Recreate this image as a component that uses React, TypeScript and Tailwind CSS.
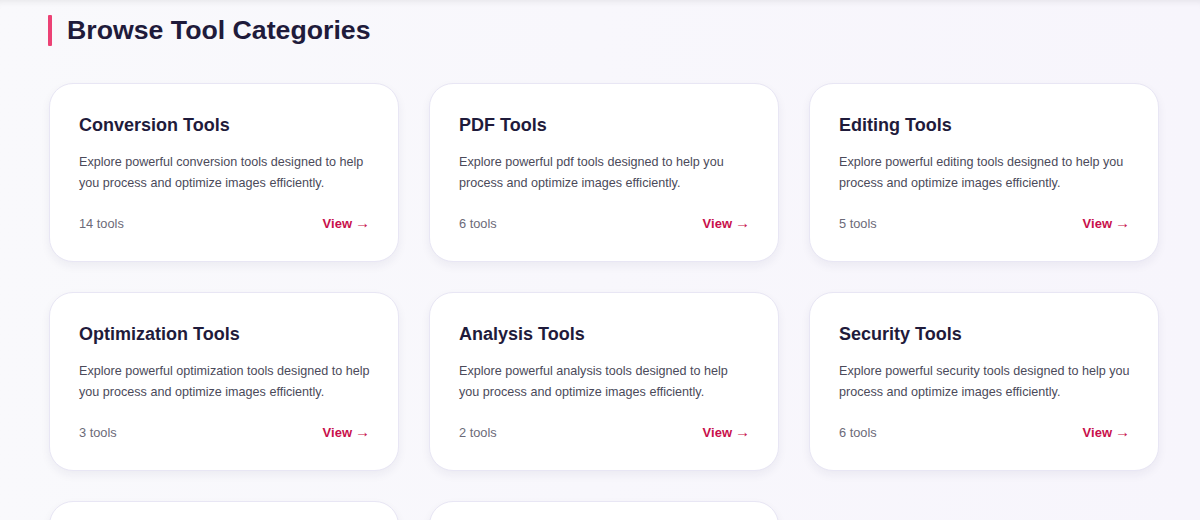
import React from "react";

const cats = [
  { name: "Conversion Tools", key: "conversion", count: 14 },
  { name: "PDF Tools", key: "pdf", count: 6 },
  { name: "Editing Tools", key: "editing", count: 5 },
  { name: "Optimization Tools", key: "optimization", count: 3 },
  { name: "Analysis Tools", key: "analysis", count: 2 },
  { name: "Security Tools", key: "security", count: 6 },
  { name: "Utility Tools", key: "utility", count: 4 },
  { name: "AI Tools", key: "ai", count: 3 },
];

export default function App() {
  return (
    <div
      className="w-[1200px] h-[520px] overflow-hidden bg-gradient-to-r from-[#f9f9fc] to-[#f7f5fc] shadow-[inset_0_7px_6px_-5px_rgba(0,0,0,0.07)]"
      style={{ fontFamily: '"Liberation Sans", Arial, Helvetica, sans-serif' }}
    >
      <div className="pl-[49px] pt-[15px]">
        <div className="flex items-center h-[31px]">
          <div className="w-[4px] h-[31px] bg-[#ec4275] rounded-[1px] -ml-[1px]" />
          <h2 className="ml-[15px] text-[26.7px] leading-[31px] font-bold text-[#1f1b3b]">
            Browse Tool Categories
          </h2>
        </div>
        <div className="mt-[37px] grid grid-cols-[350px_350px_350px] gap-[30px]">
          {cats.map((c) => (
            <div
              key={c.key}
              className="h-[179px] rounded-[24px] bg-white border border-[#e8e6f4] shadow-[0_4px_10px_rgba(40,30,90,0.06)] pl-[29px] pr-[28px] pt-[30px]"
            >
              <h3 className="text-[18px] leading-[22px] font-bold text-[#1f1b3b]">{c.name}</h3>
              <p className="mt-[16px] text-[12.6px] leading-[21px] text-[#4b4a5a]">
                {`Explore powerful ${c.key} tools designed to help you process and optimize images efficiently.`}
              </p>
              <div className="mt-[20px] flex items-center justify-between h-[20px] text-[12.8px]">
                <span className="text-[#6b6a78]">{`${c.count} tools`}</span>
                <span className="font-bold text-[#c8104b] flex items-center text-[13px]">
                  View
                  <span className="ml-[3px] font-normal text-[15px] leading-none relative -top-[2px]">→</span>
                </span>
              </div>
            </div>
          ))}
        </div>
      </div>
    </div>
  );
}
